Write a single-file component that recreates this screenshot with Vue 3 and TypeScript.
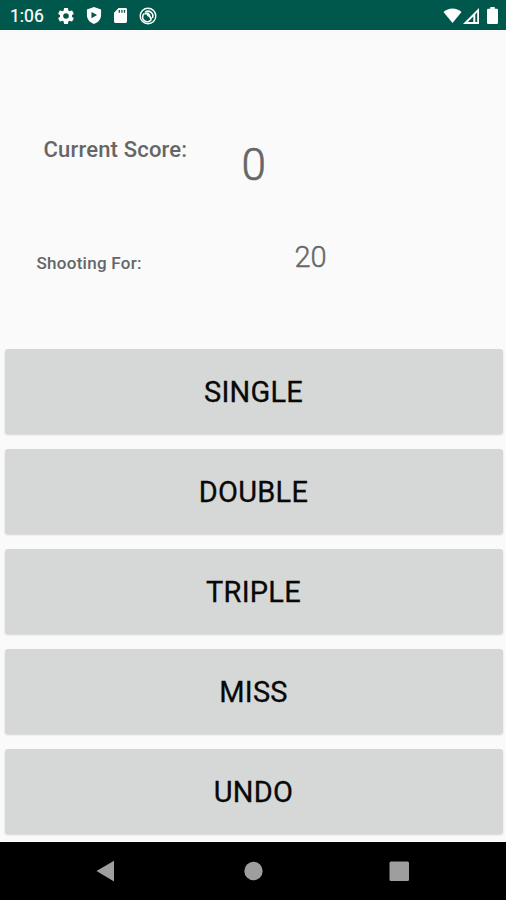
<script setup lang="ts">
import { ref } from 'vue'

const score = ref(0)
const target = ref(20)
const actions: string[] = ['Single', 'Double', 'Triple', 'Miss', 'Undo']
</script>

<template>
  <div class="screen">
    <header class="status">
      <span class="clock">1:06</span>
      <svg class="gear" viewBox="2 2 20 20" aria-hidden="true">
        <path fill-rule="evenodd" d="M19.43 12.98a7.8 7.8 0 0 0 0-1.96l2.11-1.65a.5.5 0 0 0 .12-.64l-2-3.46a.5.5 0 0 0-.61-.22l-2.49 1a7.3 7.3 0 0 0-1.69-.98l-.38-2.65A.49.49 0 0 0 14 2h-4a.49.49 0 0 0-.49.42l-.38 2.65c-.61.25-1.17.59-1.69.98l-2.49-1a.49.49 0 0 0-.61.22l-2 3.46a.49.49 0 0 0 .12.64l2.11 1.65a7.9 7.9 0 0 0 0 1.96l-2.11 1.65a.5.5 0 0 0-.12.64l2 3.46c.12.22.39.3.61.22l2.49-1c.52.4 1.08.73 1.69.98l.38 2.65c.03.24.24.42.49.42h4c.25 0 .46-.18.49-.42l.38-2.65c.61-.25 1.17-.59 1.69-.98l2.49 1c.23.09.49 0 .61-.22l2-3.46a.5.5 0 0 0-.12-.64zM12 15.5a3.5 3.5 0 1 1 0-7 3.5 3.5 0 0 1 0 7z" />
      </svg>
      <svg class="shield" viewBox="0 0 16 18" aria-hidden="true">
        <path fill-rule="evenodd" d="M8 0 15.5 2.7V8.5C15.5 13 12.4 16.5 8 18 3.6 16.5.5 13 .5 8.500V2.700zM5.300 5.400V11.800L11.300 8.600z" />
      </svg>
      <svg class="card" viewBox="0 0 14 16" aria-hidden="true">
        <path fill-rule="evenodd" d="M5 0H12.500Q14 0 14 1.500V14.500Q14 16 12.500 16H1.500Q0 16 0 14.500V5zM5 2.200V5H6.400V2.200zM7.800 2.200V5H9.200V2.200zM10.600 2.200V5H12V2.200z" />
      </svg>
      <svg class="badge" viewBox="0 0 18 18" aria-hidden="true">
        <g fill="none" stroke="#fff">
          <circle cx="9" cy="9" r="7.800" stroke-width="1.400" />
          <path stroke-width="1.600" d="M5.200 6.500A4.700 4.700 0 1 0 12.400 12.300M6.200 5.200A4.700 4.700 0 0 1 13.300 11" />
          <path stroke-width="1.800" d="M5.500 6.500H9L12.400 12.300" />
          <circle cx="9.500" cy="8" r="1.200" stroke-width="1" />
        </g>
      </svg>
      <div class="system">
        <svg class="wifi" viewBox="0 0 20 16" aria-hidden="true">
          <path d="M10 16 .4 4.200C5.500-.8 14.500-.8 19.600 4.200z" />
        </svg>
        <svg class="signal" viewBox="0 0 16 16" aria-hidden="true">
          <path fill-rule="evenodd" d="M0 16 16 0V16zM4.800 14H10.300V8.500zM12.300 6.200V14H14.200V4.300z" />
        </svg>
        <svg class="battery" viewBox="0 0 11 17" aria-hidden="true">
          <path d="M3.300 0H7.700V1.700H9.700Q11 1.700 11 3V15.700Q11 17 9.700 17H1.300Q0 17 0 15.700V3Q0 1.700 1.300 1.700H3.300z" />
        </svg>
      </div>
    </header>

    <main class="content">
      <section class="row score">
        <span class="label">Current Score:</span>
        <span class="value">{{ score }}</span>
      </section>
      <section class="row target">
        <span class="label">Shooting For:</span>
        <span class="value">{{ target }}</span>
      </section>
      <div class="actions">
        <button v-for="action in actions" :key="action" type="button">{{ action }}</button>
      </div>
    </main>

    <nav class="navbar">
      <svg viewBox="0 0 22 22" aria-label="Back"><path d="M1.500 11 19 .7V21.500z" /></svg>
      <svg viewBox="0 0 22 22" aria-label="Home"><circle cx="11.500" cy="11" r="9.200" /></svg>
      <svg viewBox="0 0 22 22" aria-label="Recents"><rect x="1.500" y="1.500" width="19.500" height="19.500" rx="1.500" /></svg>
    </nav>
  </div>
</template>

<style>
body {
  margin: 0;
}
</style>

<style scoped>
.screen {
  display: flex;
  flex-direction: column;
  width: 506px;
  height: 900px;
  overflow: hidden;
  background: #fafafa;
  font-family: Roboto, 'Liberation Sans', sans-serif;
}

.status {
  display: flex;
  align-items: center;
  box-sizing: border-box;
  height: 29.500px;
  padding: 2px 8px 0 10px;
  background: #00574b;
  color: #fff;
}

.status svg {
  flex: none;
  fill: #fff;
}

.clock {
  width: 48px;
  font-size: 17.500px;
  font-weight: 400;
  line-height: 20px;
  -webkit-text-stroke: 0.200px #fff;
}

.gear {
  width: 16px;
  height: 16px;
}

.shield {
  width: 16px;
  height: 17px;
  margin-left: 12px;
}

.card {
  width: 13px;
  height: 15px;
  margin-left: 12px;
}

.badge {
  width: 18px;
  height: 18px;
  margin-left: 12px;
}

.system {
  display: flex;
  align-items: center;
  margin-left: auto;
}

.wifi {
  width: 19px;
  height: 15px;
}

.signal {
  width: 16px;
  height: 16px;
  margin-left: 1px;
}

.battery {
  width: 11px;
  height: 17px;
  margin-left: 8px;
}

.content {
  flex: 1;
}

.row {
  display: flex;
  align-items: flex-start;
  color: #666;
  white-space: nowrap;
}

.score {
  height: 105.500px;
  padding: 106px 0 0 43.500px;
}

.score .label {
  width: 198px;
  font-size: 22px;
  font-weight: 500;
  letter-spacing: 0.180px;
  line-height: 28px;
}

.score .value {
  font-size: 44px;
  font-weight: 300;
  line-height: 58px;
  -webkit-text-stroke: 0.600px #666;
}

.target {
  height: 108px;
  padding-left: 36.500px;
}

.target .label {
  width: 258px;
  padding-top: 10px;
  font-size: 17px;
  font-weight: 500;
  letter-spacing: 0.280px;
  line-height: 24px;
}

.target .value {
  font-size: 29px;
  font-weight: 300;
  line-height: 32px;
  -webkit-text-stroke: 0.400px #666;
}

.actions {
  display: grid;
  grid-auto-rows: 85px;
  gap: 15px;
  padding: 0 3.500px 0 4.500px;
}

button {
  padding: 0;
  border: 0;
  border-radius: 3px;
  background: #d6d8d7;
  box-shadow: 0 1px 2px rgba(0, 0, 0, 0.16);
  color: #080808;
  font: 400 29px/34px Roboto, 'Liberation Sans', sans-serif;
  letter-spacing: 0.250px;
  text-transform: uppercase;
  -webkit-text-stroke: 0.300px #080808;
}

.navbar {
  display: flex;
  justify-content: space-between;
  align-items: center;
  box-sizing: border-box;
  height: 58.500px;
  padding: 0 96px 0 95px;
  background: #000;
}

.navbar svg {
  width: 22px;
  height: 22px;
  fill: #9e9e9e;
}
</style>
